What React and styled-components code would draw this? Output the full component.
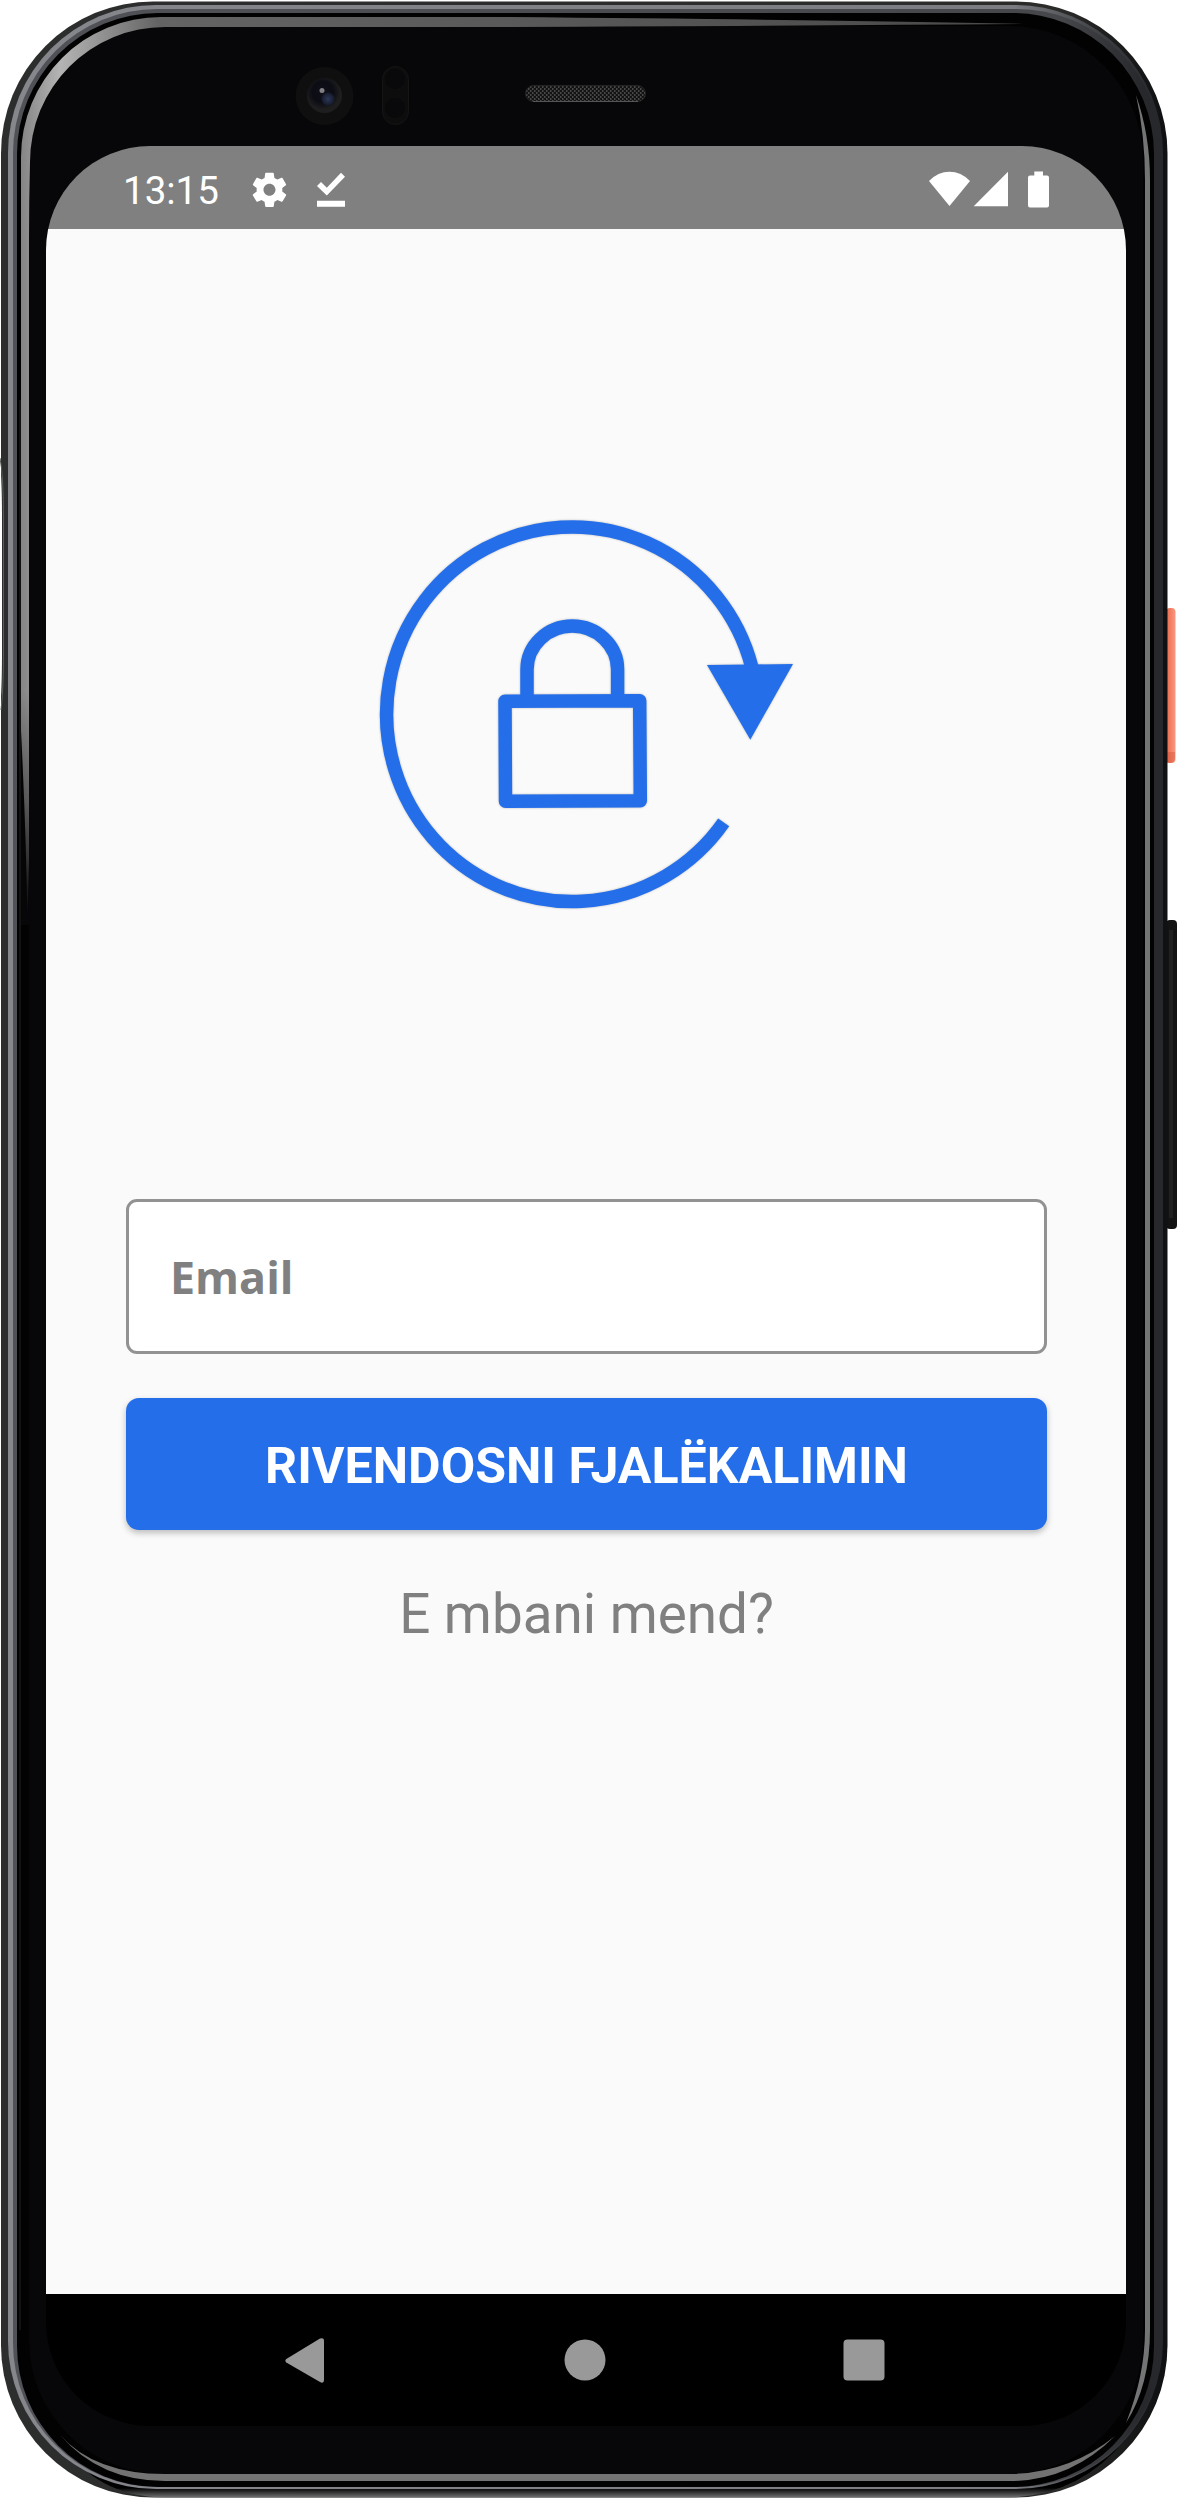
import React from "react";
import styled, { createGlobalStyle } from "styled-components";

const GlobalStyle = createGlobalStyle`
  * { box-sizing: border-box; }
  body { margin: 0; background: #fff; }
`;

const Stage = styled.main`
  position: relative;
  width: 1178px;
  height: 2498px;
  padding: 146px 52px 72px 46px;
  overflow: hidden;
  font-family: Roboto, sans-serif;
`;

const DeviceArt = styled.svg`
  position: absolute;
  inset: 0;
  z-index: 0;
`;

const Screen = styled.section`
  position: relative;
  z-index: 1;
  display: flex;
  flex-direction: column;
  width: 1080px;
  height: 2280px;
  border-radius: 104px;
  overflow: hidden;
`;

const StatusBar = styled.header`
  display: flex;
  align-items: center;
  justify-content: space-between;
  height: 83px;
  padding: 0 77px 0 77px;
  background: #808080;
  color: #fff;
`;

const StatusGroup = styled.div`
  display: flex;
  align-items: center;
`;

const Clock = styled.time`
  width: 125px;
  font-size: 38.5px;
  line-height: 46px;
  padding-top: 7px;
`;

const Content = styled.div`
  display: flex;
  flex: 1;
  flex-direction: column;
  align-items: stretch;
  padding: 286px 79px 0 80px;
  background: #fafafa;
`;

const Illustration = styled.svg`
  display: block;
  align-self: center;
  margin-left: 3px;
  filter: drop-shadow(0 0 1px rgba(0, 0, 0, 0.25));
`;

const Form = styled.form`
  display: flex;
  flex-direction: column;
  gap: 44px;
  margin-top: 288px;
`;

const EmailInput = styled.input`
  width: 100%;
  height: 155px;
  padding: 0 0 1px 41px;
  border: 3px solid #929292;
  border-radius: 11px;
  outline: none;
  background: #fff;
  font: 700 44.8px "Open Sans", "Noto Sans", sans-serif;
  &::placeholder { color: #808080; opacity: 1; }
`;

const SubmitButton = styled.button`
  height: 132px;
  padding: 3px 0 0;
  border: 0;
  border-radius: 13px;
  background: #246eea;
  color: #fff;
  font: 700 50.1px Roboto, sans-serif;
  text-align: center;
  box-shadow: 0 3px 6px rgba(0, 0, 0, 0.25);
`;

const RememberLink = styled.a`
  margin-top: 52px;
  color: #808080;
  font-size: 54.8px;
  line-height: 64px;
  text-align: center;
`;

const NavBar = styled.nav`
  display: flex;
  align-items: center;
  justify-content: space-between;
  height: 132px;
  padding: 0 241px 0 238px;
  background: #000;
  color: #999;
`;

const NavIcon = styled.svg`
  display: block;
  fill: currentColor;
`;

function Device() {
  return (
    <DeviceArt width="1178" height="2498" viewBox="0 0 1178 2498" aria-hidden="true">
      <defs>
        <linearGradient id="edge" x1="0" y1="0" x2="1178" y2="0" gradientUnits="userSpaceOnUse">
          <stop offset="0" stopColor="#2c2d2d" />
          <stop offset=".9" stopColor="#2b2b2a" />
          <stop offset=".985" stopColor="#101112" />
        </linearGradient>
        <linearGradient id="edgeFoot" x1="0" y1="2488" x2="0" y2="2498" gradientUnits="userSpaceOnUse">
          <stop offset="0" stopColor="#000" />
          <stop offset="1" stopColor="#777" />
        </linearGradient>
        <linearGradient id="metal" x1="0" y1="0" x2="1178" y2="0" gradientUnits="userSpaceOnUse">
          <stop offset="0" stopColor="#85878d" />
          <stop offset=".86" stopColor="#7b7c81" />
          <stop offset=".94" stopColor="#3b3c40" />
          <stop offset=".98" stopColor="#26282b" />
        </linearGradient>
        <linearGradient id="metalIn" x1="0" y1="0" x2="1178" y2="0" gradientUnits="userSpaceOnUse">
          <stop offset="0" stopColor="#505257" />
          <stop offset=".9" stopColor="#46474b" />
          <stop offset=".97" stopColor="#26282b" />
        </linearGradient>
        <linearGradient id="shine" x1="21" y1="0" x2="1000" y2="0" gradientUnits="userSpaceOnUse">
          <stop offset="0" stopColor="#858585" />
          <stop offset=".04" stopColor="#b4b4b4" />
          <stop offset=".14" stopColor="#646464" />
          <stop offset="1" stopColor="#4a4a4a" />
        </linearGradient>
        <linearGradient id="shineFade" x1="0" y1="690" x2="0" y2="920" gradientUnits="userSpaceOnUse">
          <stop offset="0" stopColor="#070709" stopOpacity="0" />
          <stop offset=".5" stopColor="#070709" stopOpacity=".4" />
          <stop offset="1" stopColor="#070709" />
        </linearGradient>
        <linearGradient id="power" x1="0" y1="0" x2="1" y2="0">
          <stop offset="0" stopColor="#e96f53" />
          <stop offset=".4" stopColor="#f27b60" />
          <stop offset="1" stopColor="#f79a80" />
        </linearGradient>
        <radialGradient id="lens" cx=".45" cy=".4">
          <stop offset="0" stopColor="#101118" />
          <stop offset=".6" stopColor="#0c0d14" />
          <stop offset="1" stopColor="#1e1e1e" />
        </radialGradient>
        <radialGradient id="glint">
          <stop offset="0" stopColor="#2c3858" />
          <stop offset="1" stopColor="#151a2b" />
        </radialGradient>
        <pattern id="mesh" width="4" height="4" patternUnits="userSpaceOnUse">
          <rect width="4" height="4" fill="#131313" />
          <path d="M0 0h1.5v2H0zM2 2h1.5v2H2z" fill="#484848" />
        </pattern>
      </defs>
      <rect x="1166" y="608" width="9.5" height="155" rx="4" fill="url(#power)" />
      <path d="M1167 752h8v5q0 6-6 6h-2z" fill="#cf4f35" opacity=".4" />
      <rect x="1166" y="920" width="11" height="309" rx="4" fill="#131313" />
      <rect x="1169" y="930" width="4" height="288" fill="#202020" />
      <rect x="1" y="1.5" width="1166.5" height="2496" rx="152" fill="url(#edge)" />
      <path d="M60 2440Q95 2497 165 2497.5H1010Q1080 2495 1125 2440L1090 2400H90z" fill="url(#edgeFoot)" />
      <path d="M0 462Q2 480 2 520V650Q2 690 0 710z" fill="#fff" />
      <path d="M0 458Q3.5 475 3.5 520V650Q3.5 690 1 710" fill="none" stroke="#59605e" />
      <rect x="8" y="5" width="1155" height="2484" rx="148" fill="url(#metal)" />
      <rect x="13" y="9" width="1148" height="2478" rx="144" fill="url(#metalIn)" />
      <rect x="17" y="13" width="1137" height="2474" rx="141" fill="#020203" />
      <rect x="29" y="26" width="1114" height="2448" rx="134" fill="#070709" />
      <path
        d="M21 157A140 140 0 0 1 161 17H500Q850 20 1030 24Q850 25.5 500 27H165A135 135 0 0 0 30 162Q29 200 29 240V860L27.5 920Q26 830 21 730z"
        fill="url(#shine)"
      />
      <path d="M20.5 690H30V925H20.5z" fill="url(#shineFade)" />
      <path d="M1136 95Q1150 135 1150 180V2330Q1150 2385 1126 2423Q1145 2375 1145 2330V180Q1145 135 1136 95z" fill="#737475" />
      <path d="M60 2435Q95 2474 165 2474H1010Q1070 2473 1115 2436Q1070 2481 1010 2481H165Q100 2481 60 2435z" fill="#737373" />
      <path d="M20 2330V400" stroke="#222" strokeWidth="1" />
      <circle cx="324.5" cy="96" r="29" fill="#0f0f10" />
      <circle cx="324.5" cy="95.5" r="17.5" fill="url(#lens)" />
      <circle cx="328" cy="99" r="6.5" fill="url(#glint)" />
      <circle cx="322" cy="90.5" r="2.5" fill="#817f86" />
      <rect x="382.5" y="66.5" width="26" height="58" rx="13" fill="#0d0d0e" stroke="#151516" />
      <circle cx="395" cy="79" r="10" fill="#09090b" />
      <circle cx="395" cy="108" r="10" fill="#09090b" />
      <rect x="525.5" y="85.5" width="120" height="16" rx="8" fill="url(#mesh)" stroke="#242424" />
      <path d="M533 101.5h105" stroke="#555" />
    </DeviceArt>
  );
}

function ResetIllustration() {
  return (
    <Illustration width="420" height="396" viewBox="378 515 420 396" aria-hidden="true">
      <g fill="none" stroke="#246eea" strokeWidth="13.5">
        <path d="M751.8 667A185.6 187.3 0 1 0 723.7 822.4" />
        <path d="M527 701V669.5A45.3 43.5 0 0 1 617.6 669.5V701" />
        <path d="M505 701.2L639.7 700.7L640.3 800.7L505.5 801.3Z" strokeLinejoin="round" />
      </g>
      <path d="M707 665L793 664L750.3 739.7Z" fill="#246eea" />
    </Illustration>
  );
}

export default function App() {
  return (
    <Stage>
      <GlobalStyle />
      <Device />
      <Screen>
        <StatusBar>
          <StatusGroup>
            <Clock>13:15</Clock>
            <svg width="94" height="42" viewBox="248 166.5 94 42" fill="#fff" overflow="visible">
              <g transform="translate(248.9 168.7) scale(1.715)">
                <path d="M19.43 12.98c.04-.32.07-.64.07-.98s-.03-.66-.07-.98l2.11-1.65c.19-.15.24-.42.12-.64l-2-3.46c-.12-.22-.39-.3-.61-.22l-2.49 1c-.52-.4-1.08-.73-1.69-.98l-.38-2.65C14.46 2.18 14.25 2 14 2h-4c-.25 0-.46.18-.49.42l-.38 2.65c-.61.25-1.17.59-1.69.98l-2.49-1c-.23-.09-.49 0-.61.22l-2 3.46c-.13.22-.07.49.12.64l2.11 1.65c-.04.32-.07.65-.07.98s.03.66.07.98l-2.11 1.65c-.19.15-.24.42-.12.64l2 3.46c.12.22.39.3.61.22l2.49-1c.52.4 1.08.73 1.69.98l.38 2.65c.03.24.24.42.49.42h4c.25 0 .46-.18.49-.42l.38-2.65c.61-.25 1.17-.59 1.69-.98l2.49 1c.23.09.49 0 .61-.22l2-3.46c.12-.22.07-.49-.12-.64l-2.11-1.65zM12 15.5c-1.93 0-3.5-1.57-3.5-3.5s1.57-3.5 3.5-3.5 3.5 1.57 3.5 3.5-1.57 3.5-3.5 3.5z" />
              </g>
              <path d="M317 185.5L321 181.5L326.8 187.3L341 172.3L345 176.3L326.8 195ZM317 200.3H345V206.3H317Z" />
            </svg>
          </StatusGroup>
          <StatusGroup>
            <svg width="120" height="42" viewBox="929 166.5 120 42" fill="#fff">
              <path d="M929 180.5Q938 171.3 949.5 171.3T970 180.5L949.5 205.5Z" />
              <path d="M973.7 205.8L1008 171.3V205.8Z" />
              <path d="M1034.3 171H1043V175H1047Q1049 175 1049 177V205Q1049 207 1047 207H1030Q1028 207 1028 205V177Q1028 175 1030 175H1034.3Z" />
            </svg>
          </StatusGroup>
        </StatusBar>
        <Content>
          <ResetIllustration />
          <Form onSubmit={(e) => e.preventDefault()}>
            <EmailInput type="email" placeholder="Email" aria-label="Email" />
            <SubmitButton type="submit">RIVENDOSNI FJALËKALIMIN</SubmitButton>
          </Form>
          <RememberLink>E mbani mend?</RememberLink>
        </Content>
        <NavBar>
          <NavIcon width="42" height="46" viewBox="284 2337 42 46">
            <path d="M286.3 2359L320 2338.6Q324 2337 324 2341V2380Q324 2384 320 2382L286.3 2362.5Q284.5 2360.7 286.3 2359Z" />
          </NavIcon>
          <NavIcon width="42" height="42" viewBox="0 0 42 42"><circle cx="21" cy="21" r="20.5" /></NavIcon>
          <NavIcon width="42" height="42" viewBox="0 0 42 42"><rect x=".5" y=".5" width="41" height="41" rx="4" /></NavIcon>
        </NavBar>
      </Screen>
    </Stage>
  );
}
